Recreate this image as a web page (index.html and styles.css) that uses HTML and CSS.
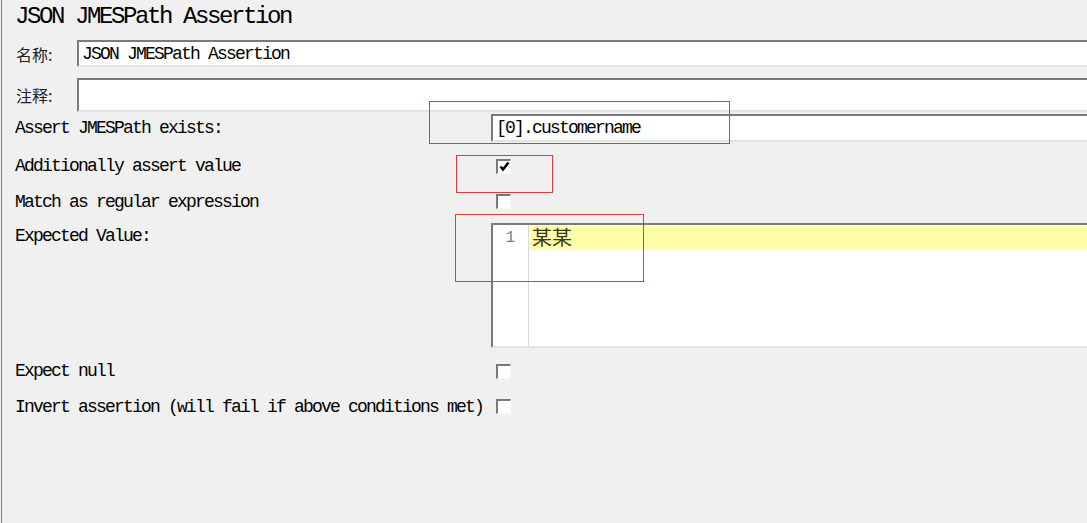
FILE: index.html
```html
<!DOCTYPE html>
<html>
<head>
<meta charset="utf-8">
<link rel="stylesheet" href="styles.css">
</head>
<body>
<div class="panel">
  <div class="title">JSON JMESPath Assertion</div>

  <div class="row row-name">
    <div class="cjk-label">名称:</div>
    <div class="field field-name">JSON JMESPath Assertion</div>
  </div>
  <div class="row row-comment">
    <div class="cjk-label">注释:</div>
    <div class="field field-comment"></div>
  </div>

  <div class="row row-path">
    <div class="label">Assert JMESPath exists:</div>
    <div class="field field-path">[0].customername</div>
  </div>
  <div class="row row-check">
    <div class="label">Additionally assert value</div>
    <div class="check-cell"><span class="checkbox checked"><svg width="11" height="11" viewBox="0 0 11 11"><path d="M1.5 5.5 L4 8.5 L9.5 1.5" fill="none" stroke="#000" stroke-width="2.6" stroke-linejoin="miter" stroke-linecap="butt"/></svg></span></div>
  </div>
  <div class="row row-check">
    <div class="label">Match as regular expression</div>
    <div class="check-cell"><span class="checkbox"></span></div>
  </div>
  <div class="row row-editor">
    <div class="label label-top">Expected Value:</div>
    <div class="editor">
      <div class="gutter">1</div>
      <div class="code"><div class="line-current">某某</div></div>
    </div>
  </div>
  <div class="row row-check row-null">
    <div class="label">Expect null</div>
    <div class="check-cell"><span class="checkbox"></span></div>
  </div>
  <div class="row row-check">
    <div class="label">Invert assertion (will fail if above conditions met)</div>
    <div class="check-cell"><span class="checkbox"></span></div>
  </div>

  <div class="mark mark-path"></div>
  <div class="mark mark-check"></div>
  <div class="mark mark-value"></div>
</div>
</body>
</html>
```

FILE: styles.css
```css
html, body {
  margin: 0;
  padding: 0;
  background: #f0f0f0;
  overflow: hidden;
}
body {
  width: 1087px;
  height: 523px;
  font-family: "Liberation Mono", "Noto Sans CJK SC", monospace;
  color: #000;
}
.panel {
  position: relative;
  margin-left: 1px;
  border-left: 1px solid #808080;
  height: 523px;
  box-sizing: border-box;
  padding-left: 13px;
  overflow: hidden;
}
.title {
  height: 36px;
  line-height: 33px;
  font-size: 24px;
  letter-spacing: -2.4px;
  white-space: nowrap;
}
.row {
  display: flex;
  align-items: center;
}
.cjk-label {
  width: 62px;
  flex: none;
  font-family: "Noto Sans CJK SC", sans-serif;
  font-size: 16px;
  color: #222;
  padding-left: 1px;
  box-sizing: border-box;
}
.label {
  width: 476px;
  flex: none;
  font-size: 18px;
  letter-spacing: -1.8px;
  white-space: nowrap;
}
.label-top {
  align-self: flex-start;
  padding-top: 3px;
}
.field {
  flex: 1;
  margin-right: -30px;
  align-self: stretch;
  background: #fff;
  border-top: 2px solid #7a7a7a;
  border-left: 2px solid #7a7a7a;
  border-bottom: 2px solid #e3e3e3;
  border-right: 2px solid #e3e3e3;
  box-sizing: border-box;
  padding-left: 3px;
  display: flex;
  align-items: center;
  font-size: 18px;
  letter-spacing: -1.8px;
  white-space: nowrap;
}
.row-name {
  margin-top: 4px;
  height: 27px;
}
.row-comment {
  margin-top: 11px;
  height: 34px;
}
.row-path {
  margin-top: 2px;
  height: 28px;
}
.row-check {
  height: 35px;
}
.row-path + .row-check {
  margin-top: 6px;
  height: 36px;
}
.check-cell {
  padding-left: 5px;
  display: flex;
  align-items: center;
}
.checkbox {
  width: 15px;
  height: 15px;
  box-sizing: border-box;
  background: #fff;
  border-top: 2px solid #7a7a7a;
  border-left: 2px solid #7a7a7a;
  border-right: 1px solid #f8f8f8;
  border-bottom: 1px solid #f8f8f8;
  display: flex;
  align-items: center;
  justify-content: center;
}
.row-editor {
  margin-top: 4px;
  height: 125px;
  align-items: stretch;
}
.editor {
  flex: 1;
  margin-right: -30px;
  display: flex;
  background: #fff;
  border-top: 2px solid #7a7a7a;
  border-left: 2px solid #7a7a7a;
  border-bottom: 2px solid #e3e3e3;
  box-sizing: border-box;
}
.gutter {
  width: 36px;
  flex: none;
  border-right: 1px solid #d8d8d8;
  box-sizing: border-box;
  text-align: right;
  padding-right: 14px;
  padding-top: 3px;
  font-size: 16px;
  letter-spacing: -1px;
  color: #808080;
  line-height: 20px;
}
.code {
  flex: 1;
  padding-top: 1px;
  padding-left: 1px;
}
.line-current {
  height: 24px;
  background: #ffffaa;
  font-family: "Noto Sans CJK SC", sans-serif;
  font-size: 20px;
  line-height: 22px;
  color: #3a3a1a;
  padding-left: 2px;
}
.row-null {
  margin-top: 5px;
  height: 36px;
}
.mark {
  position: absolute;
  border: 1px solid #e53935;
  box-sizing: border-box;
  z-index: 2;
}
.mark-path {
  left: 427px;
  top: 101px;
  width: 301px;
  height: 43px;
}
.mark-check {
  left: 454px;
  top: 155px;
  width: 97px;
  height: 38px;
}
.mark-value {
  left: 453px;
  top: 214px;
  width: 189px;
  height: 68px;
}
```
